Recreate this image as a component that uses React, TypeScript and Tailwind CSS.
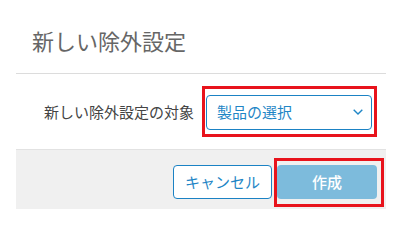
import React from "react";

export default function App() {
  const font = { fontFamily: '"Noto Sans CJK JP", "Noto Sans", sans-serif' };
  return (
    <div className="relative w-[400px] h-[224px] bg-white overflow-hidden" style={font}>
      <div className="ml-4 w-[370px]">
        <div className="h-[74px] border-b border-[#dcdcdc] pl-4 pt-[29px]">
          <div className="text-[22px] leading-[22px] text-[#666666]">新しい除外設定</div>
        </div>
        <div className="h-[75px] flex items-center justify-end gap-3 pr-[14px] pt-[1px]">
          <div className="text-[15px] leading-[20px] text-[#444444]">新しい除外設定の対象</div>
          <div className="w-[166px] h-[35px] border border-[#1b82c4] rounded-[4px] flex items-center justify-between pl-[10px] pr-[8px]">
            <span className="text-[15px] leading-[20px] text-[#1f86c6]">製品の選択</span>
            <svg width="10" height="6" viewBox="0 0 10 6" fill="none">
              <path d="M0.7 0.7 L5 5 L9.3 0.7" stroke="#1f86c6" strokeWidth="1.4" />
            </svg>
          </div>
        </div>
        <div className="h-[60px] bg-[#f0f0f0] border-t border-[#e2e2e2] flex items-start justify-end gap-[5px] pr-[9px] pt-[15px]">
          <button className="w-[99px] h-[34px] bg-white border border-[#1b82c4] rounded-[4px] text-[15px] leading-[20px] text-[#1f86c6]">
            キャンセル
          </button>
          <button className="w-[100px] h-[34px] bg-[#7dbbdc] rounded-[4px] text-[15px] leading-[20px] text-white font-medium">
            作成
          </button>
        </div>
      </div>
      <div className="absolute left-[202px] top-[86px] w-[175px] h-[51px] border-[3px] border-[#e8131c]" />
      <div className="absolute left-[274px] top-[158px] w-[110px] h-[49px] border-[3px] border-[#e8131c]" />
    </div>
  );
}
